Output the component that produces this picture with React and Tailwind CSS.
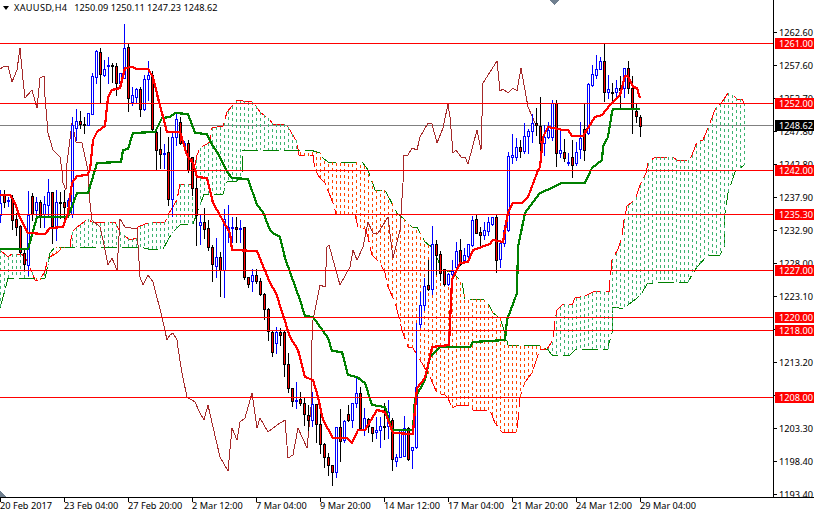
const C = [
  [0,190,203,215,222,"u"],[4,190,195,202,207,"d"],[8,197,200,201,206,"u"],[12,195,198,220,229,"d"],[16,213,219,227,235,"d"],
  [20,225,226,252,253,"d"],[24,250,253,264,270,"d"],[28,191,215,265,275,"u"],[32,193,196,214,220,"d"],[36,197,202,210,222,"u"],
  [40,200,202,217,227,"d"],[44,196,204,214,227,"u"],[48,179,192,205,215,"u"],[52,192,192,226,243,"d"],[56,190,202,227,240,"u"],
  [60,192,202,203,218,"d"],[64,190,202,207,218,"d"],[68,198,200,206,215,"u"],[72,117,125,214,217,"u"],[76,109,121,128,140,"u"],
  [80,111,121,124,128,"d"],[84,117,124,125,133,"d"],[88,113,113,125,125,"u"],[92,73,76,114,114,"u"],[96,50,51,77,83,"u"],
  [100,48,52,74,102,"d"],[104,60,69,75,76,"u"],[108,57,65,66,83,"u"],[112,63,65,66,82,"d"],[116,63,66,83,95,"d"],
  [120,73,73,83,87,"u"],[124,24,48,78,78,"u"],[128,43,47,98,111,"d"],[132,87,95,102,105,"u"],[136,88,89,97,103,"u"],
  [140,87,89,109,116,"d"],[144,75,79,109,110,"u"],[148,61,75,79,100,"u"],[152,71,75,129,130,"d"],[156,127,132,150,170,"d"],
  [160,127,149,154,168,"d"],[164,144,153,154,168,"u"],[168,137,152,199,205,"d"],[172,132,137,199,216,"u"],[176,113,119,137,145,"u"],
  [180,117,122,143,144,"d"],[184,141,143,145,147,"u"],[188,140,143,170,172,"d"],[192,157,157,188,195,"d"],[196,170,188,215,245,"d"],
  [200,215,222,225,244,"u"],[204,208,222,229,238,"d"],[208,220,228,247,250,"d"],[212,245,247,264,281,"d"],[216,238,257,266,277,"u"],
  [220,252,257,270,296,"d"],[224,209,219,270,297,"u"],[228,205,227,230,242,"u"],[232,217,227,228,242,"u"],[236,217,227,229,242,"d"],
  [240,220,228,229,242,"u"],[244,227,227,277,279,"d"],[248,277,277,284,287,"d"],[252,269,275,281,291,"u"],[256,269,275,281,283,"d"],
  [260,278,281,294,295,"d"],[264,293,294,309,319,"d"],[268,308,309,331,340,"d"],[272,331,332,352,356,"d"],[276,327,332,343,353,"u"],
  [280,328,332,335,345,"d"],[284,330,332,364,376,"d"],[288,353,364,388,392,"d"],[292,388,388,401,406,"d"],[296,382,400,401,408,"u"],
  [300,392,399,403,405,"d"],[304,397,403,414,425,"d"],[308,405,415,420,430,"d"],[312,392,404,420,426,"u"],[316,405,404,424,442,"d"],
  [320,408,424,444,453,"d"],[324,443,444,457,467,"d"],[328,453,457,465,475,"d"],[332,465,465,472,485,"d"],[336,427,427,472,477,"u"],
  [340,409,427,441,461,"d"],[344,420,421,440,442,"u"],[348,405,414,420,421,"d"],[352,403,403,420,427,"u"],[356,378,393,403,407,"u"],
  [360,387,393,428,430,"d"],[364,408,418,430,435,"u"],[368,418,419,426,432,"d"],[372,427,427,433,441,"d"],[376,417,430,432,438,"u"],
  [380,417,426,430,447,"u"],[384,403,426,427,439,"d"],[388,400,412,426,438,"u"],[392,418,420,459,470,"d"],[396,454,457,461,466,"u"],
  [400,430,430,457,457,"u"],[404,416,428,456,456,"u"],[408,427,428,459,460,"d"],[412,447,447,450,468,"u"],[416,323,387,447,448,"u"],
  [420,292,305,324,327,"u"],[424,278,286,305,310,"u"],[428,260,285,289,290,"d"],[432,226,244,289,294,"u"],[436,240,244,255,274,"d"],
  [440,251,254,273,280,"d"],[444,269,269,284,285,"d"],[448,273,274,284,285,"u"],[452,260,271,274,278,"u"],[456,242,251,267,270,"u"],
  [460,239,250,264,265,"d"],[464,248,255,260,263,"u"],[468,244,244,256,260,"u"],[472,216,220,245,246,"u"],[476,215,219,233,233,"d"],
  [480,227,232,235,248,"d"],[484,222,230,235,239,"u"],[488,217,222,231,235,"u"],[492,217,217,224,225,"u"],[496,215,217,260,272,"d"],
  [500,243,243,259,267,"u"],[504,225,230,243,246,"u"],[508,152,156,230,231,"u"],[512,134,155,157,163,"u"],[516,138,147,157,160,"u"],
  [520,140,147,151,157,"d"],[524,123,136,151,153,"u"],[528,129,131,136,153,"u"],[532,114,123,131,142,"u"],[536,108,123,125,135,"d"],
  [540,97,126,143,166,"d"],[544,125,137,143,155,"u"],[548,122,130,137,138,"u"],[552,100,103,137,140,"u"],[556,100,103,153,166,"d"],
  [560,128,150,153,157,"u"],[564,139,152,158,161,"d"],[568,153,162,163,165,"u"],[572,140,157,165,177,"d"],[576,142,152,163,165,"u"],
  [580,122,138,149,158,"u"],[584,103,129,150,160,"d"],[588,83,84,133,134,"u"],[592,65,74,85,86,"u"],[596,55,69,75,78,"u"],
  [600,57,61,69,69,"u"],[604,44,61,92,101,"d"],[608,75,89,92,98,"u"],[612,83,92,93,100,"d"],[616,80,88,92,98,"u"],
  [620,76,88,90,109,"d"],[624,68,68,88,97,"u"],[628,61,68,88,93,"d"],[632,76,88,108,133,"d"],[636,104,111,116,122,"d"],
  [640,115,117,126,136,"d"],
];

const TENKAN = [[0,195],[10,195],[15,203],[20,218],[28,233],[45,234],[50,228],[63,227],[68,213],[72,183],[77,176],[87,175],[90,170],[93,140],[97,132],[105,126],[108,97],[112,90],[120,88],[125,68],[132,67],[137,69],[148,69],[153,77],[158,98],[167,132],[180,132],[187,155],[193,163],[197,177],[207,178],[213,203],[230,233],[232,250],[257,251],[270,283],[276,293],[290,337],[298,350],[305,377],[313,380],[318,397],[323,420],[333,438],[347,438],[352,443],[358,430],[365,430],[377,410],[385,412],[393,433],[413,434],[414,420],[417,388],[425,378],[428,365],[432,347],[449,345],[452,280],[460,263],[468,262],[473,250],[490,244],[493,240],[503,242],[508,212],[513,203],[522,203],[528,197],[537,173],[540,167],[543,137],[548,127],[563,130],[568,130],[572,136],[583,136],[590,125],[595,117],[602,115],[610,105],[620,95],[625,76],[628,76],[633,87],[637,88],[640,98]];
const KIJUN = [[0,249],[28,249],[37,217],[68,217],[77,193],[88,193],[95,170],[97,163],[121,162],[123,150],[128,149],[133,133],[155,132],[162,118],[170,117],[175,113],[188,114],[195,133],[207,134],[211,143],[217,152],[223,163],[227,172],[232,178],[248,179],[257,205],[263,212],[270,230],[273,233],[280,237],[285,258],[300,300],[305,316],[313,317],[328,338],[332,351],[342,352],[348,375],[357,377],[365,383],[372,405],[385,407],[392,430],[413,430],[415,398],[425,380],[430,357],[440,347],[470,347],[473,342],[505,340],[507,320],[517,293],[518,247],[525,213],[540,193],[547,190],[562,183],[585,183],[590,172],[592,168],[602,160],[603,147],[608,137],[612,112],[613,109],[640,109]];
const CHIKOU = [[0,69],[5,66],[8,66],[12,82],[17,70],[20,48],[23,80],[25,98],[32,90],[37,108],[40,78],[44,76],[45,97],[48,133],[53,150],[60,157],[62,170],[63,183],[66,190],[67,163],[72,123],[76,142],[82,143],[85,157],[88,170],[90,203],[92,220],[100,227],[103,240],[108,265],[112,258],[117,270],[120,219],[125,227],[137,229],[140,277],[143,285],[148,275],[153,282],[162,317],[167,340],[170,335],[173,333],[177,340],[178,348],[182,373],[187,397],[195,402],[200,413],[204,420],[208,405],[213,427],[220,457],[228,471],[232,428],[237,440],[240,422],[245,418],[252,393],[257,428],[260,418],[268,432],[277,425],[285,420],[288,458],[293,455],[298,428],[307,448],[311,407],[312,340],[313,320],[320,285],[325,287],[327,247],[329,245],[340,285],[350,267],[353,250],[357,260],[363,247],[368,222],[373,233],[378,233],[388,217],[393,258],[400,230],[403,183],[404,155],[408,155],[412,148],[417,150],[420,137],[428,123],[432,124],[437,143],[443,128],[448,104],[450,117],[453,153],[456,150],[461,157],[465,157],[468,164],[477,130],[481,150],[483,83],[497,61],[500,91],[503,89],[508,93],[513,88],[517,91],[521,68],[528,107],[535,123]];
const SPAN_A = [[0,250],[8,257],[12,254],[22,254],[28,262],[35,280],[40,280],[45,271],[48,258],[57,253],[62,248],[70,247],[72,232],[77,227],[88,219],[93,223],[115,222],[120,232],[130,240],[137,238],[138,227],[150,222],[165,222],[168,215],[177,200],[180,184],[191,184],[197,155],[200,148],[210,142],[212,128],[223,126],[227,112],[237,100],[243,101],[253,102],[260,112],[270,120],[273,124],[285,124],[288,127],[297,142],[299,155],[308,156],[313,155],[315,170],[320,178],[325,183],[333,203],[336,214],[355,215],[358,227],[365,229],[368,237],[372,255],[380,263],[385,273],[388,287],[395,302],[402,330],[408,347],[413,348],[430,377],[437,393],[445,395],[448,398],[452,408],[458,405],[470,405],[473,410],[490,410],[495,423],[502,432],[517,432],[520,397],[525,382],[532,373],[540,349],[547,349],[553,340],[555,320],[557,310],[563,304],[572,305],[575,298],[585,296],[593,292],[598,291],[609,292],[610,280],[612,260],[618,249],[622,237],[624,220],[627,206],[635,200],[640,185],[646,173],[648,163],[655,157],[673,157],[677,160],[690,160],[697,142],[703,140],[710,123],[716,107],[722,102],[728,93],[733,95],[737,99],[742,99],[744,103]];
const SPAN_B = [[0,308],[5,290],[8,278],[45,278],[48,265],[50,253],[55,247],[117,247],[140,247],[148,249],[163,249],[172,233],[180,225],[193,224],[204,194],[223,194],[227,182],[237,181],[242,173],[243,150],[287,150],[310,150],[317,152],[321,153],[323,158],[328,162],[357,162],[363,163],[368,170],[375,190],[385,190],[397,213],[405,220],[412,227],[417,227],[425,242],[433,248],[442,270],[453,272],[462,283],[465,299],[483,299],[488,303],[493,313],[500,318],[505,333],[508,345],[540,346],[548,350],[552,355],[570,355],[575,350],[593,349],[608,349],[609,343],[612,333],[613,307],[625,309],[628,305],[637,298],[642,293],[647,284],[655,283],[688,282],[693,273],[697,267],[707,256],[720,255],[724,248],[725,213],[728,193],[735,172],[744,165]];

const LEVELS = [43, 103, 170, 214, 270, 317, 330, 397];
const PRICES = ["1262.60","1257.60","1252.70","1247.80","1242.80","1237.90","1232.90","1228.00","1223.10","1218.10","1213.20","1208.30","1203.30","1198.40","1193.40"];
const DATES = ["20 Feb 2017","23 Feb 04:00","27 Feb 20:00","2 Mar 12:00","7 Mar 04:00","9 Mar 20:00","14 Mar 12:00","17 Mar 04:00","21 Mar 20:00","24 Mar 12:00","29 Mar 04:00"];
const TAGS = [
  { text: "1261.00", cls: "top-[38px] bg-[#ff0000]" },
  { text: "1252.00", cls: "top-[98px] bg-[#ff0000]" },
  { text: "1248.62", cls: "top-[120px] bg-black" },
  { text: "1242.00", cls: "top-[165px] bg-[#ff0000]" },
  { text: "1235.30", cls: "top-[209px] bg-[#ff0000]" },
  { text: "1227.00", cls: "top-[265px] bg-[#ff0000]" },
  { text: "1220.00", cls: "top-[312px] bg-[#ff0000]" },
  { text: "1218.00", cls: "top-[325px] bg-[#ff0000]" },
  { text: "1208.00", cls: "top-[392px] bg-[#ff0000]" },
];

const pts = (line) => line.map((p) => p.join(",")).join(" ");

function yAt(line, x) {
  for (let i = 1; i < line.length; i++) {
    if (x <= line[i][0]) {
      const [x0, y0] = line[i - 1];
      const [x1, y1] = line[i];
      return y0 + ((y1 - y0) * (x - x0)) / (x1 - x0 || 1);
    }
  }
  return line[line.length - 1][1];
}

function cloud() {
  let green = "";
  let orange = "";
  for (let x = 0; x <= 744; x += 4) {
    const a = Math.round(yAt(SPAN_A, x));
    const b = Math.round(yAt(SPAN_B, x));
    const seg = `M${x + 0.5} ${a}V${b}`;
    if (a < b) green += seg;
    else orange += seg;
  }
  return { green, orange };
}

function Candle({ c }) {
  const [x, high, top, bottom, low, kind] = c;
  const up = kind === "u";
  const line = up ? "#0000ff" : "#000000";
  return (
    <g>
      <path d={`M${x + 0.5} ${high}V${low + 1}`} stroke={line} strokeWidth="1" />
      <rect x={x - 0.5} y={top + 0.5} width="2" height={Math.max(bottom - top, 1)} fill={up ? "#ffffff" : "#ff0000"} stroke={line} strokeWidth="1" />
    </g>
  );
}

function Chart() {
  const { green, orange } = cloud();
  return (
    <svg width="773" height="497" shapeRendering="crispEdges" className="block">
      <path d="M0 125.5H773" stroke="#808080" strokeWidth="1" />
      <polyline points={pts(SPAN_A)} fill="none" stroke="#ff0000" strokeWidth="1" strokeDasharray="16 5" />
      <polyline points={pts(SPAN_B)} fill="none" stroke="#008000" strokeWidth="1" strokeDasharray="16 5" />
      <path d={green} stroke="#3cb371" strokeWidth="1" strokeDasharray="3 3" fill="none" />
      <path d={orange} stroke="#ff4500" strokeWidth="1" strokeDasharray="3 3" fill="none" />
      <polyline points={pts(CHIKOU)} fill="none" stroke="#a52a2a" strokeWidth="1" />
      {C.map((c) => (
        <Candle key={c[0]} c={c} />
      ))}
      <polyline points={pts(KIJUN)} fill="none" stroke="#008000" strokeWidth="2.2" />
      <polyline points={pts(TENKAN)} fill="none" stroke="#ff0000" strokeWidth="2.2" />
      {LEVELS.map((y) => (
        <path key={y} d={`M0 ${y + 0.5}H773`} stroke="#ff0000" strokeWidth="1" />
      ))}
      <polygon points="550,0 559,0 554.5,5" fill="#708090" />
      <polygon points="0,491 6,497 0,497" fill="#708090" />
    </svg>
  );
}

export default function App() {
  return (
    <div className="w-[814px] h-[514px] overflow-hidden bg-white text-black text-[9.2px] leading-none font-['Noto_Sans','Liberation_Sans',sans-serif]">
      <div className="flex h-[498px] border-b border-black">
        <div className="relative w-[774px] border-r border-black">
          <Chart />
          <div className="absolute left-[3px] top-[3px] flex items-center whitespace-nowrap">
            <span className="w-0 h-0 border-x-[3.5px] border-x-transparent border-t-[4px] border-t-black" />
            <span className="ml-[5px] tracking-[0.3px]">XAUUSD,H4</span>
            <span className="ml-[7px]">1250.09 1250.11 1247.23 1248.62</span>
          </div>
        </div>
        <div className="relative flex-1">
          <div className="flex flex-col pt-[16px]">
            {PRICES.map((p) => (
              <div key={p} className="flex items-center h-[33px]">
                <span className="w-[3px] h-px bg-black" />
                <span className="ml-[2px]">{p}</span>
              </div>
            ))}
          </div>
          <div>
            {TAGS.map((t) => (
              <div key={t.text} className={`absolute left-[1px] right-0 h-[11px] flex items-center pl-[4px] text-white ${t.cls}`}>
                {t.text}
              </div>
            ))}
          </div>
        </div>
      </div>
      <div className="flex">
        {DATES.map((d) => (
          <div key={d} className="w-[64px] shrink-0 relative h-[16px] whitespace-nowrap flex">
            <span className="absolute left-0 top-0 w-px h-[4px] bg-black" />
            <span className="pt-[3px]">{d}</span>
          </div>
        ))}
      </div>
    </div>
  );
}
